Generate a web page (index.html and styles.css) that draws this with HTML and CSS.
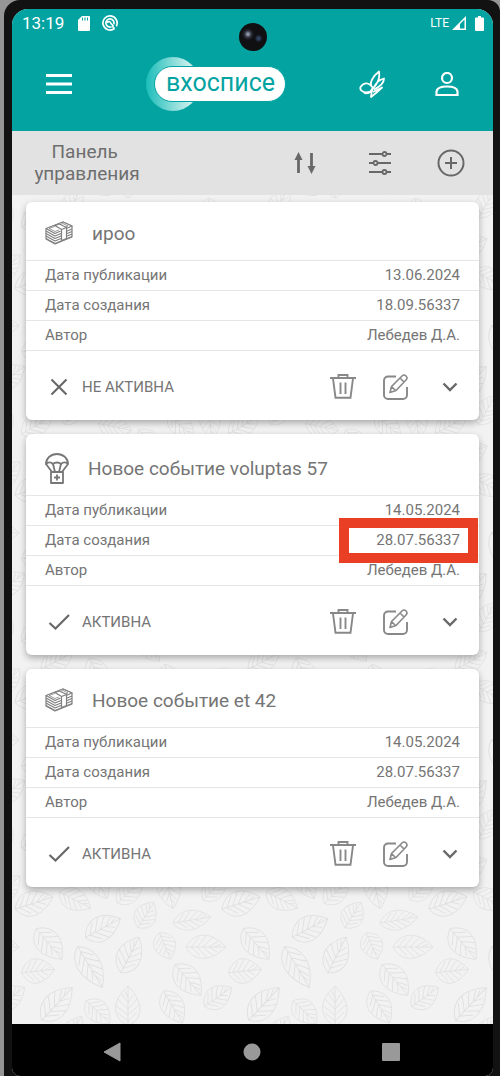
FILE: index.html
```html
<!DOCTYPE html>
<html lang="ru">
<head>
<meta charset="utf-8">
<meta name="viewport" content="width=device-width, initial-scale=1">
<title>Панель управления</title>
<link rel="stylesheet" href="styles.css">
</head>
<body>
<svg class="defs" aria-hidden="true">
  <defs>
    <symbol id="money" viewBox="0 0 28 24">
      <g fill="#fff" stroke="#808080" stroke-width="1.2" stroke-linejoin="round">
        <path d="M1 8v10l9 5 17-7V5L18 1z"/>
        <path d="M1 17.500l9 5 17-7M1 15l9 5 17-7M1 12.500l9 5 17-7M1 10l9 5 17-7" fill="none"/>
        <path d="M1 7.500L18 1l9 4-17 7.500z"/>
        <path d="M4 7.500l14-5 5 2.500-13 5.500z" stroke-width=".8"/>
        <path d="M9.500 5l6.500-2.500 1 9z" stroke="none"/>
        <path d="M10 4.500l6.500 4v11l5-2V6.500L14.500 3z"/>
        <path d="M16.500 8.500l5-2" fill="none"/>
      </g>
    </symbol>
    <symbol id="parachute" viewBox="0 0 24 31">
      <g fill="none" stroke="#777" stroke-width="1.800" stroke-linejoin="round">
        <path d="M1 11C1 5 6 1 12 1s11 4 11 10c-2-2-5-2-7 0-2-2-6-2-8 0-2-2-5-2-7 0z"/>
        <path d="M1 11l6 8M23 11l-6 8M8 11l2 8M16 11l-2 8"/>
        <path d="M6 19h12v11H6zM12 21.500v6M9 24.500h6"/>
      </g>
    </symbol>
    <symbol id="cross" viewBox="0 0 22 18"><path d="M3.500 1.500l15 15m0-15l-15 15" fill="none" stroke="#686868" stroke-width="2.100"/></symbol>
    <symbol id="check" viewBox="0 0 22 18"><path d="M1.500 10l6 5.500L21 2" fill="none" stroke="#686868" stroke-width="2.200"/></symbol>
    <symbol id="trash" viewBox="0 0 26 26">
      <g fill="none" stroke="#888" stroke-width="1.900">
        <path d="M0 4h26M8.500 4V1h9v3M3 4.500l2.500 19.200h15L23 4.500M10.500 8.500v11.500M15.500 8.500v11.500"/>
      </g>
    </symbol>
    <symbol id="edit" viewBox="0 0 26 26">
      <g fill="none" stroke="#888" stroke-width="1.900" stroke-linejoin="round">
        <path d="M13 2.500H5A4 4 0 0 0 1 6.500V21a4 4 0 0 0 4 4h15a4 4 0 0 0 4-4v-8"/>
        <path d="M7 18.500l1.500-6L19 2q2-2 4 0t0 4L13 16.500zM17 4l4 4M8.500 12.500l4 4" stroke-width="1.600"/>
      </g>
    </symbol>
    <symbol id="chevron" viewBox="0 0 16 10"><path d="M1.500 1.500L8 8l6.500-6.500" fill="none" stroke="#686868" stroke-width="2.400"/></symbol>
    <g id="leaf" fill="none" stroke="#e0e0e0" stroke-width=".9">
      <path d="M-20 0C-13-14 3-19 20 0C3 17-13 15-20 0zH20M-15 0q5-6 8-10M-9 0q5-6 9-12M-3 0q5-6 10-10M3 0q5-4 9-6M9 0q3-2 6-3M-15 0q5 5 9 9M-9 0q5 5 10 11M-3 0q5 5 10 9M3 0q5 3 8 5"/>
    </g>
    <g id="leaves">
      <use href="#leaf" transform="translate(34 903) rotate(-18)"/>
      <use href="#leaf" transform="translate(75 900) rotate(28) scale(.88)"/>
      <use href="#leaf" transform="translate(103 928) rotate(-28)"/>
      <use href="#leaf" transform="translate(49 944) rotate(50)"/>
      <use href="#leaf" transform="translate(90 967) rotate(59) scale(1.200 .95)"/>
      <use href="#leaf" transform="translate(38 971) rotate(-6) scale(.83 1)"/>
      <use href="#leaf" transform="translate(130 955) rotate(-63)"/>
      <use href="#leaf" transform="translate(146 915) rotate(-58) scale(.75 .9)"/>
      <use href="#leaf" transform="translate(165 946) rotate(67) scale(.72 .9)"/>
      <use href="#leaf" transform="translate(192 920) rotate(-9) scale(.97 .8)"/>
      <use href="#leaf" transform="translate(206 947) scale(1 .95)"/>
      <use href="#leaf" transform="translate(188 980) rotate(50)"/>
      <use href="#leaf" transform="translate(218 997) rotate(-35) scale(.83 .9)"/>
      <use href="#leaf" transform="translate(57 1004) rotate(-47) scale(1.120 1)"/>
      <use href="#leaf" transform="translate(98 1012) rotate(44) scale(.82 .9)"/>
      <use href="#leaf" transform="translate(128 1006) rotate(-90)"/>
      <use href="#leaf" transform="translate(173 1007) rotate(59) scale(.93)"/>
      <use href="#leaf" transform="translate(130 891) rotate(-44) scale(.88)"/>
      <use href="#leaf" transform="translate(169 890) rotate(78) scale(.95)"/>
      <use href="#leaf" transform="translate(98 882) rotate(62) scale(.95 .9)"/>
      <use href="#leaf" transform="translate(215 888) rotate(-45) scale(.85)"/>
      <use href="#leaf" transform="translate(73 1031) rotate(-60) scale(.85)"/>
      <use href="#leaf" transform="translate(37 1046) rotate(-30) scale(.9)"/>
      <use href="#leaf" transform="translate(115 1048) rotate(12) scale(.85)"/>
      <use href="#leaf" transform="translate(149 1063) rotate(50) scale(.8)"/>
      <use href="#leaf" transform="translate(181 1047) rotate(42) scale(.85)"/>
      <use href="#leaf" transform="translate(210 1043) rotate(85) scale(.85)"/>
      <use href="#leaf" transform="translate(57 1075) rotate(-28) scale(.9)"/>
    </g>
    <pattern id="foliage" x="0" y="0" width="207" height="207" patternUnits="userSpaceOnUse">
      <g transform="translate(-12 -816)">
        <use href="#leaves" x="0" y="0"/>
        <use href="#leaves" x="-207" y="0"/>
        <use href="#leaves" x="0" y="-207"/>
        <use href="#leaves" x="-207" y="-207"/>
      </g>
    </pattern>
    <linearGradient id="halo"><stop offset="0" stop-color="#1bbdb9"/><stop offset=".8" stop-color="#c8eeec"/></linearGradient>
  </defs>
</svg>

<div class="device">
  <div class="screen">
    <header class="top">
      <div class="status">
        <span class="clock">13:19</span>
        <svg class="sd" viewBox="0 0 12 15"><path d="M4 0h7a1 1 0 0 1 1 1v13a1 1 0 0 1-1 1H1a1 1 0 0 1-1-1V4z" fill="#fff"/><path d="M4.500 1.500v3M7 1.500v3M9.500 1.500v3" stroke="#03a3a1" stroke-width="1.100"/></svg>
        <svg class="sync" viewBox="0 0 16 16" fill="none" stroke="#fff"><path d="M12.500 13.500A7.100 7.100 0 1 1 14.300 11.300M12.500 13.500L10 11" stroke-width="1.700"/><path d="M9.500 11.800A4.100 4.100 0 1 1 11.900 9.200M5 7.500q3-2 4 1l2.500 2.500" stroke-width="1.700"/></svg>
        <span class="network">LTE</span>
        <svg class="signal" viewBox="0 0 14 14"><path d="M14 0v14H0z" fill="#fff"/><path d="M8 8l4.500-4.500v9H8z" fill="#03a3a1"/></svg>
        <svg class="battery" viewBox="0 0 9 15"><path d="M3 0h3v1.500h2a1 1 0 0 1 1 1V14a1 1 0 0 1-1 1H1a1 1 0 0 1-1-1V2.500a1 1 0 0 1 1-1h2z" fill="#fff"/></svg>
      </div>
      <div class="toolbar">
        <button class="icon-btn menu" aria-label="Меню"><svg width="26" height="20" viewBox="0 0 26 20"><path d="M0 1.500h26M0 10h26M0 18.500h26" stroke="#fff" stroke-width="3"/></svg></button>
        <div class="logo">
          <svg class="halo" viewBox="0 0 54 54"><circle cx="27" cy="27" r="27" fill="url(#halo)"/></svg>
          <span class="pill">вхосписе</span>
        </div>
        <button class="icon-btn" aria-label="Цитаты"><svg width="26" height="28" viewBox="0 0 26 28" fill="none" stroke="#fff" stroke-width="1.800" stroke-linejoin="round"><path d="M14 18C9 14 14 6 20 1.500c1 6 0 11-6 16.500zM14 18C10 12 5 12 1.500 17c-1 3 2 5 5 5.500 4 0 7-1 7.500-4.500zM15 17.500c2-5 6-8 10-9 0 5-4 8-10 11M14 22l9-4.500-6 5.500M5 23c3 1 6 0 8-4l-1 8 5-4"/></svg></button>
        <button class="icon-btn user" aria-label="Профиль"><svg width="24" height="24" viewBox="0 0 24 24" fill="none" stroke="#fff" stroke-width="2.200"><circle cx="12" cy="6" r="5"/><path d="M1.500 23v-3.500C2 16 7 14.500 12 14.500S22 16 22.500 19.500V23z"/></svg></button>
      </div>
    </header>

    <div class="panel">
      <h1>Панель управления</h1>
      <button class="icon-btn" aria-label="Сортировка"><svg width="22" height="22" viewBox="0 0 22 22"><path d="M4.500 5v16M17.500 1v16" stroke="#686868" stroke-width="2.800"/><path d="M.5 8l4-8 4 8zM13.500 14h8l-4 8z" fill="#686868"/></svg></button>
      <button class="icon-btn filter" aria-label="Фильтр"><svg width="22" height="24" viewBox="0 0 22 24" fill="#e2e2e2" stroke="#686868" stroke-width="1.800"><path d="M0 3h22M0 12h22M0 21h22"/><circle cx="15.500" cy="3" r="2"/><circle cx="6.500" cy="12" r="2"/><circle cx="15.500" cy="21" r="2"/></svg></button>
      <button class="icon-btn" aria-label="Добавить"><svg width="28" height="28" viewBox="0 0 28 28" fill="none" stroke="#686868" stroke-width="2"><circle cx="14" cy="14" r="12.500"/><path d="M14 8v12M8 14h12"/></svg></button>
    </div>

    <main class="content">
      <svg class="backdrop" aria-hidden="true"><rect width="100%" height="100%" fill="url(#foliage)"/></svg>

      <article class="card">
        <h2><svg class="money"><use href="#money"/></svg>ироо</h2>
        <dl>
          <div><dt>Дата публикации</dt><dd>13.06.2024</dd></div>
          <div><dt>Дата создания</dt><dd>18.09.56337</dd></div>
          <div><dt>Автор</dt><dd>Лебедев Д.А.</dd></div>
        </dl>
        <footer>
          <svg class="state"><use href="#cross"/></svg><span>НЕ АКТИВНА</span>
          <button class="icon-btn" aria-label="Удалить"><svg class="tool"><use href="#trash"/></svg></button>
          <button class="icon-btn edit" aria-label="Редактировать"><svg class="tool"><use href="#edit"/></svg></button>
          <button class="icon-btn" aria-label="Развернуть"><svg class="more"><use href="#chevron"/></svg></button>
        </footer>
      </article>

      <article class="card">
        <h2 class="tall"><svg class="parachute"><use href="#parachute"/></svg>Новое событие voluptas 57</h2>
        <dl>
          <div><dt>Дата публикации</dt><dd>14.05.2024</dd></div>
          <div class="marked"><dt>Дата создания</dt><dd>28.07.56337</dd></div>
          <div><dt>Автор</dt><dd>Лебедев Д.А.</dd></div>
        </dl>
        <footer>
          <svg class="state"><use href="#check"/></svg><span>АКТИВНА</span>
          <button class="icon-btn" aria-label="Удалить"><svg class="tool"><use href="#trash"/></svg></button>
          <button class="icon-btn edit" aria-label="Редактировать"><svg class="tool"><use href="#edit"/></svg></button>
          <button class="icon-btn" aria-label="Развернуть"><svg class="more"><use href="#chevron"/></svg></button>
        </footer>
      </article>

      <article class="card">
        <h2><svg class="money"><use href="#money"/></svg>Новое событие et 42</h2>
        <dl>
          <div><dt>Дата публикации</dt><dd>14.05.2024</dd></div>
          <div><dt>Дата создания</dt><dd>28.07.56337</dd></div>
          <div><dt>Автор</dt><dd>Лебедев Д.А.</dd></div>
        </dl>
        <footer>
          <svg class="state"><use href="#check"/></svg><span>АКТИВНА</span>
          <button class="icon-btn" aria-label="Удалить"><svg class="tool"><use href="#trash"/></svg></button>
          <button class="icon-btn edit" aria-label="Редактировать"><svg class="tool"><use href="#edit"/></svg></button>
          <button class="icon-btn" aria-label="Развернуть"><svg class="more"><use href="#chevron"/></svg></button>
        </footer>
      </article>
    </main>

    <nav class="system">
      <button class="icon-btn" aria-label="Назад"><svg width="18" height="20" viewBox="0 0 18 20"><path d="M17 1v18L1 10z" fill="#999" stroke="#999" stroke-linejoin="round"/></svg></button>
      <button class="icon-btn" aria-label="Домой"><svg width="18" height="18" viewBox="0 0 18 18"><circle cx="9" cy="9" r="8.500" fill="#999"/></svg></button>
      <button class="icon-btn" aria-label="Недавние"><svg width="18" height="18" viewBox="0 0 18 18"><rect width="18" height="18" rx="1" fill="#999"/></svg></button>
    </nav>
  </div>
  <span class="camera"></span>
</div>
</body>
</html>
```
FILE: styles.css
```css
*, *::before, *::after { box-sizing: border-box; }

body {
  margin: 0;
  background: #969696;
  color: #757575;
  font-family: Roboto, "Noto Sans", sans-serif;
  font-size: 15px;
}

svg { display: block; flex: none; }

.defs { position: absolute; width: 0; height: 0; }

.device {
  position: relative;
  display: flex;
  min-height: 100vh;
  margin-left: 4px;
  padding: 9px 7px 0 8px;
  background: #121212;
  border-radius: 16px 12px 0 0;
}

.screen {
  flex: 1;
  min-width: 0;
  display: flex;
  flex-direction: column;
  overflow: hidden;
  background: #f2f2f2;
  border-radius: 16px 16px 8px 8px;
}

.camera {
  position: absolute;
  top: 23px;
  left: 50%;
  width: 28px;
  height: 28px;
  margin-left: -13px;
  border-radius: 50%;
  background: radial-gradient(circle at 32% 40%, #a9b4c8 0, #2a2c38 14%, transparent 24%), radial-gradient(circle at 70% 55%, #39517c 0, transparent 16%), #101013;
}

.icon-btn {
  display: flex;
  flex: none;
  margin: 0;
  padding: 0;
  border: 0;
  background: none;
}

.top { background: #03a3a1; color: #fff; }

.status {
  display: flex;
  align-items: center;
  height: 28px;
  padding: 0 9px 0 10px;
}
.clock { font-size: 17px; }
.sd { width: 12px; height: 15px; margin-left: 14px; }
.sync { width: 16px; height: 16px; margin: 0 auto 0 12px; }
.network { font-size: 12px; }
.signal { width: 14px; height: 14px; margin: 0 9px 0 3px; }
.battery { width: 9px; height: 15px; }

.toolbar {
  display: flex;
  align-items: center;
  height: 94px;
  padding: 0 34px 0 34px;
}
.menu { margin-right: 74px; }
.user { margin-left: 50px; }

.logo {
  position: relative;
  display: flex;
  align-items: center;
  height: 54px;
  margin-right: auto;
  padding-left: 8px;
}
.halo { position: absolute; left: 0; top: 0; width: 54px; height: 54px; }
.pill {
  position: relative;
  height: 36px;
  padding: 0 10px 0 11px;
  border: 1px solid #03a3a1;
  border-radius: 18px;
  background: #fff;
  color: #03a3a1;
  font-size: 25px;
  line-height: 32px;
}

.panel {
  display: flex;
  align-items: center;
  height: 64px;
  padding: 0 28px 0 20px;
  background: #e2e2e2;
}
.panel h1 {
  width: 110px;
  margin: 0 auto 0 0;
  color: #6e6e6e;
  font-size: 19px;
  font-weight: 400;
  line-height: 22px;
  text-align: center;
  white-space: break-spaces;
}
.filter { margin: 0 46px 0 53px; }

.content {
  position: relative;
  display: flex;
  flex: 1;
  flex-direction: column;
  gap: 14px;
  padding: 7px 14px 20px;
}
.backdrop { position: absolute; inset: 0; width: 100%; height: 100%; }

.card {
  position: relative;
  background: #fff;
  border-radius: 6px;
  box-shadow: 0 3px 7px rgba(0, 0, 0, .3);
}
.card h2 {
  display: flex;
  align-items: center;
  gap: 19px;
  height: 58px;
  margin: 0;
  padding: 4px 19px 0;
  font-size: 19px;
  font-weight: 400;
}
.card .tall { height: 61px; padding-top: 8px; }
.money { width: 28px; height: 24px; }
.parachute { width: 24px; height: 31px; }

dl { margin: 0; border-bottom: 1px solid #e6e6e6; }
dl div {
  position: relative;
  display: flex;
  align-items: center;
  justify-content: space-between;
  height: 30px;
  padding: 0 19px 2px;
  border-top: 1px solid #e6e6e6;
}
dt, dd { margin: 0; }

.marked::after {
  content: "";
  position: absolute;
  z-index: 1;
  inset: -8px 1px -8px auto;
  width: 139px;
  border: 10px solid #e94025;
}

.card footer {
  display: flex;
  align-items: center;
  height: 69px;
  padding: 2px 21px 0 22px;
}
.card footer span { margin: 0 auto 0 12px; }
.state { width: 22px; height: 18px; }
.tool { width: 26px; height: 26px; }
.edit { margin: 0 33px 0 27px; }
.more { width: 16px; height: 10px; }

.system {
  display: flex;
  align-items: center;
  justify-content: space-between;
  height: 52px;
  padding: 4px 93px 0 91px;
  background: #000;
}
```
